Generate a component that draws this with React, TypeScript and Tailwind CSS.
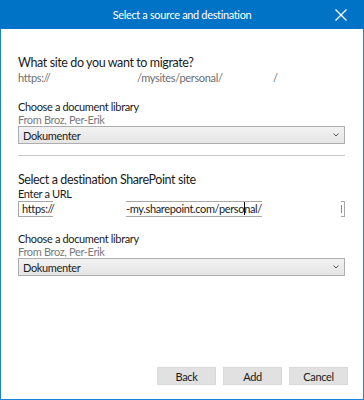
export default function App() {
	return (
		<div
			className="w-[364px] h-[400px] flex flex-col bg-white border-x border-b border-[#1883d7] text-[#1b1b1b] whitespace-nowrap"
			style={{ fontFamily: '"Segoe UI", Lato, "Noto Sans", sans-serif' }}
		>
			{/* title bar */}
			<div className="relative h-[29px] shrink-0 bg-[#0173c7] flex items-center justify-center -mx-px">
				<span className="text-[11px] tracking-[-0.35px] text-white leading-none">Select a source and destination</span>
				<svg className="absolute right-[17px] top-[9px] w-[12px] h-[12px]" viewBox="0 0 12 12" fill="none">
					<path d="M0.5 0.5L11.5 11.5M11.5 0.5L0.5 11.5" stroke="white" strokeWidth="1.3" />
				</svg>
			</div>

			<div className="flex-1 flex flex-col px-[17px] tracking-[-0.35px]">
				{/* source */}
				<div className="pt-[26px] text-[12.5px] tracking-[-0.4px] leading-[16px]">What site do you want to migrate?</div>
				<div className="flex text-[11px] leading-[14px] text-[#6d6d6d]">
					<span className="w-[32px]">https://</span>
					<span className="ml-[87px] w-[83px]">/mysites/personal/</span>
					<span className="ml-[53px]">/</span>
				</div>

				<div className="mt-[15px] text-[11px] leading-[13px]">Choose a document library</div>
				<div className="text-[11px] leading-[13px] text-[#7a7a7a]">From Broz, Per-Erik</div>
				<Dropdown value="Dokumenter" />

				<div className="mt-[11px] h-px bg-[#c8c8c8] mr-[1px]" />

				{/* destination */}
				<div className="mt-[16px] text-[12.5px] tracking-[-0.4px] leading-[16px]">Select a destination SharePoint site</div>
				<div className="-mt-px text-[11px] leading-[13px]">Enter a URL</div>
				<div className="mt-px flex h-[16px] text-[11px] leading-[14px] mr-[1px]">
					<div className="w-[35px] border-l border-y border-[#a8a8a8] pl-[3px]">https://</div>
					<div className="w-[73px]" />
					<div className="w-[136px] border-y border-[#a8a8a8] flex">
						<span>-my.sharepoint.com/perso</span>
						<span className="w-px h-[13px] bg-black" />
						<span>nal/</span>
					</div>
					<div className="flex-1" />
					<div className="w-[4px] border-y border-r border-[#a8a8a8] flex items-center">
						<span className="w-px h-[8px] bg-[#8a8a8a]" />
					</div>
				</div>

				<div className="mt-[15px] text-[11px] leading-[13px]">Choose a document library</div>
				<div className="text-[11px] leading-[13px] text-[#7a7a7a]">From Broz, Per-Erik</div>
				<Dropdown value="Dokumenter" />

				{/* buttons */}
				<div className="mt-auto mb-[14px] flex justify-end gap-[7px] mr-[-2px]">
					{["Back", "Add", "Cancel"].map((b) => (
						<button
							key={b}
							type="button"
							className="w-[59px] h-[18px] bg-[#e1e1e1] border border-[#d9d9d9] text-[11px] leading-none text-[#1b1b1b]"
						>
							{b}
						</button>
					))}
				</div>
			</div>
		</div>
	);
}

function Dropdown({ value }: { value: string }) {
	return (
		<div className="h-[18px] mr-[1px] flex items-center justify-between border border-[#adadad] bg-gradient-to-b from-[#f2f2f2] to-[#e5e5e5] px-[4px]">
			<span className="text-[11px] leading-none">{value}</span>
			<svg className="w-[6px] h-[4px] mr-[1px]" viewBox="0 0 6 4" fill="none">
				<path d="M0.5 0.5L3 3L5.5 0.5" stroke="#555" strokeWidth="1" />
			</svg>
		</div>
	);
}
